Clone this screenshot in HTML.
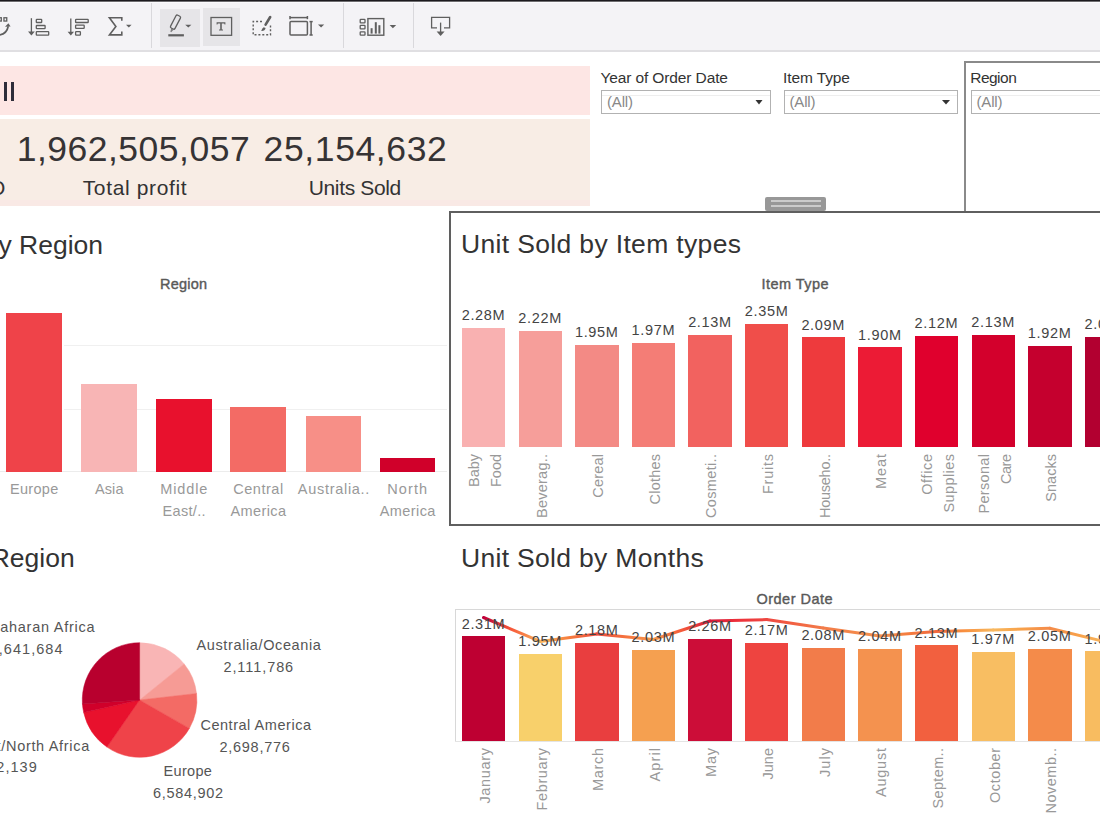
<!DOCTYPE html>
<html><head><meta charset="utf-8"><style>
html,body{margin:0;padding:0;}
body{width:1100px;height:825px;position:relative;overflow:hidden;background:#fff;font-family:"Liberation Sans", sans-serif;}
</style></head><body>
<div style="position:absolute;left:0px;top:0px;width:1100px;height:50px;background:#f4f3f6;"></div>
<div style="position:absolute;left:0px;top:0px;width:1100px;height:1px;background:#1c1a1e;"></div>
<div style="position:absolute;left:0px;top:1px;width:1100px;height:1px;background:#6e6d70;"></div>
<div style="position:absolute;left:0px;top:2px;width:1100px;height:1px;background:#fbfafd;"></div>
<div style="position:absolute;left:0px;top:50px;width:1100px;height:2px;background:#e0dfe2;"></div>
<div style="position:absolute;left:151px;top:3px;width:1px;height:45px;background:#d9d8dc;"></div>
<div style="position:absolute;left:343px;top:3px;width:1px;height:45px;background:#d9d8dc;"></div>
<div style="position:absolute;left:413px;top:3px;width:1px;height:45px;background:#d9d8dc;"></div>
<div style="position:absolute;left:160px;top:9px;width:40px;height:38px;background:#e6e5e8;"></div>
<div style="position:absolute;left:203px;top:8px;width:37px;height:38px;background:#e6e5e8;"></div>
<div style="position:absolute;left:0px;top:66px;width:590px;height:49px;background:#fde6e4;"></div>
<div style="position:absolute;left:0px;top:119px;width:590px;height:86.5px;background:#f8ede5;"></div>
<div style="position:absolute;left:0px;top:200px;width:590px;height:5.5px;background:#f9e9e5;"></div>
<div style="position:absolute;left:3.9px;top:81.8px;width:2.7px;height:19px;background:#2e2d3a;"></div>
<div style="position:absolute;left:10.9px;top:81.8px;width:2.7px;height:19px;background:#2e2d3a;"></div>
<div style="position:absolute;left:601px;top:90px;width:170px;height:24px;background:#fff;box-sizing:border-box;border:1px solid #b2b2b2;"></div>
<div style="position:absolute;left:783.5px;top:90px;width:174px;height:24px;background:#fff;box-sizing:border-box;border:1px solid #b2b2b2;"></div>
<div style="position:absolute;left:971px;top:90px;width:140px;height:24px;background:#fff;box-sizing:border-box;border:1px solid #b2b2b2;"></div>
<div style="position:absolute;left:602px;top:95px;width:168px;height:1px;background:#eeeeee;"></div>
<div style="position:absolute;left:784.5px;top:95px;width:172px;height:1px;background:#eeeeee;"></div>
<div style="position:absolute;left:972px;top:95px;width:130px;height:1px;background:#eeeeee;"></div>
<div style="position:absolute;left:964px;top:61px;width:2px;height:150px;background:#8a8a8a;"></div>
<div style="position:absolute;left:964px;top:61px;width:136px;height:2px;background:#8a8a8a;"></div>
<div style="position:absolute;left:765px;top:197px;width:61px;height:14px;background:#989898;border-radius:2px;"></div>
<div style="position:absolute;left:771px;top:200px;width:50px;height:1.5px;background:#cbcbcb;"></div>
<div style="position:absolute;left:771px;top:205px;width:50px;height:1.5px;background:#cbcbcb;"></div>
<div style="position:absolute;left:449px;top:211px;width:700px;height:2px;background:#5f5f5f;"></div>
<div style="position:absolute;left:449px;top:211px;width:2px;height:315px;background:#5f5f5f;"></div>
<div style="position:absolute;left:449px;top:524px;width:700px;height:2px;background:#5f5f5f;"></div>
<div style="position:absolute;left:462.0px;top:327.5px;width:43.4px;height:119.5px;background:#f9b1b1;"></div>
<div style="position:absolute;left:518.62px;top:331px;width:43.4px;height:116px;background:#f69e9a;"></div>
<div style="position:absolute;left:575.24px;top:344.5px;width:43.4px;height:102.5px;background:#f38a85;"></div>
<div style="position:absolute;left:631.86px;top:343.2px;width:43.4px;height:103.80000000000001px;background:#f47d76;"></div>
<div style="position:absolute;left:688.48px;top:335px;width:43.4px;height:112px;background:#f2625f;"></div>
<div style="position:absolute;left:745.1px;top:324px;width:43.4px;height:123px;background:#f04e4a;"></div>
<div style="position:absolute;left:801.72px;top:337.4px;width:43.4px;height:109.60000000000002px;background:#ee3a3d;"></div>
<div style="position:absolute;left:858.34px;top:347.4px;width:43.4px;height:99.60000000000002px;background:#ec1b35;"></div>
<div style="position:absolute;left:914.96px;top:335.8px;width:43.4px;height:111.19999999999999px;background:#e0002d;"></div>
<div style="position:absolute;left:971.58px;top:334.9px;width:43.4px;height:112.10000000000002px;background:#d3002c;"></div>
<div style="position:absolute;left:1028.2px;top:345.7px;width:43.4px;height:101.30000000000001px;background:#c5002e;"></div>
<div style="position:absolute;left:1084.82px;top:337.2px;width:43.4px;height:109.80000000000001px;background:#b20030;"></div>
<div style="position:absolute;left:64px;top:345px;width:383px;height:1px;background:#f0f0f0;"></div>
<div style="position:absolute;left:64px;top:409px;width:383px;height:1px;background:#f0f0f0;"></div>
<div style="position:absolute;left:0px;top:471px;width:447px;height:1px;background:#ececec;"></div>
<div style="position:absolute;left:6px;top:312.6px;width:55.5px;height:159.0px;background:#ef4349;"></div>
<div style="position:absolute;left:81px;top:384px;width:55.5px;height:87.6px;background:#f8b5b5;"></div>
<div style="position:absolute;left:156px;top:398.6px;width:55.5px;height:73.0px;background:#e8112d;"></div>
<div style="position:absolute;left:230.2px;top:407.3px;width:55.5px;height:64.3px;background:#f36b65;"></div>
<div style="position:absolute;left:305.7px;top:415.7px;width:55.5px;height:55.9px;background:#f78f87;"></div>
<div style="position:absolute;left:379.5px;top:457.7px;width:55.5px;height:13.9px;background:#d0002a;"></div>
<div style="position:absolute;left:455px;top:609px;width:700px;height:1px;background:#d8d8d8;"></div>
<div style="position:absolute;left:455px;top:609px;width:1px;height:133px;background:#d8d8d8;"></div>
<div style="position:absolute;left:455px;top:741px;width:700px;height:1px;background:#e4e4e4;"></div>
<div style="position:absolute;left:462.0px;top:636.4px;width:43.4px;height:104.6px;background:#be0032;"></div>
<div style="position:absolute;left:518.62px;top:653.9px;width:43.4px;height:87.1px;background:#f8d06b;"></div>
<div style="position:absolute;left:575.24px;top:642.5px;width:43.4px;height:98.5px;background:#e93e3f;"></div>
<div style="position:absolute;left:631.86px;top:650px;width:43.4px;height:91px;background:#f5a050;"></div>
<div style="position:absolute;left:688.48px;top:639px;width:43.4px;height:102px;background:#cc0d38;"></div>
<div style="position:absolute;left:745.1px;top:642.6px;width:43.4px;height:98.4px;background:#ee4440;"></div>
<div style="position:absolute;left:801.72px;top:647.6px;width:43.4px;height:93.4px;background:#f27c4a;"></div>
<div style="position:absolute;left:858.34px;top:648.6px;width:43.4px;height:92.4px;background:#f4924f;"></div>
<div style="position:absolute;left:914.96px;top:645.2px;width:43.4px;height:95.8px;background:#f2603f;"></div>
<div style="position:absolute;left:971.58px;top:652px;width:43.4px;height:89px;background:#f8be62;"></div>
<div style="position:absolute;left:1028.2px;top:649px;width:43.4px;height:92px;background:#f48b4a;"></div>
<div style="position:absolute;left:1084.82px;top:651.2px;width:43.4px;height:89.8px;background:#f8bc60;"></div>
<svg width="1100" height="825" style="position:absolute;left:0;top:0"><defs><linearGradient id="lg0" gradientUnits="userSpaceOnUse" x1="483.5" y1="617.5" x2="540.12" y2="641.4"><stop offset="0" stop-color="#c0003a"/><stop offset="0.5" stop-color="#f75a3a"/><stop offset="1" stop-color="#f7b45a"/></linearGradient><linearGradient id="lg1" gradientUnits="userSpaceOnUse" x1="540.12" y1="641.4" x2="596.74" y2="634"><stop offset="0" stop-color="#f7b45a"/><stop offset="0.5" stop-color="#f77f3e"/><stop offset="1" stop-color="#ea4a3e"/></linearGradient><linearGradient id="lg2" gradientUnits="userSpaceOnUse" x1="596.74" y1="634" x2="653.36" y2="639.5"><stop offset="0" stop-color="#ea4a3e"/><stop offset="0.5" stop-color="#f5723e"/><stop offset="1" stop-color="#f59a4c"/></linearGradient><linearGradient id="lg3" gradientUnits="userSpaceOnUse" x1="653.36" y1="639.5" x2="709.98" y2="621"><stop offset="0" stop-color="#f59a4c"/><stop offset="0.5" stop-color="#f55a3a"/><stop offset="1" stop-color="#d51a3a"/></linearGradient><linearGradient id="lg4" gradientUnits="userSpaceOnUse" x1="709.98" y1="621" x2="766.5999999999999" y2="619.6"><stop offset="0" stop-color="#d51a3a"/><stop offset="0.5" stop-color="#ee313a"/><stop offset="1" stop-color="#ee4842"/></linearGradient><linearGradient id="lg5" gradientUnits="userSpaceOnUse" x1="766.5999999999999" y1="619.6" x2="823.22" y2="628"><stop offset="0" stop-color="#ee4842"/><stop offset="0.5" stop-color="#f26242"/><stop offset="1" stop-color="#f27c4a"/></linearGradient><linearGradient id="lg6" gradientUnits="userSpaceOnUse" x1="823.22" y1="628" x2="879.8399999999999" y2="636"><stop offset="0" stop-color="#f27c4a"/><stop offset="0.5" stop-color="#f4874a"/><stop offset="1" stop-color="#f4924f"/></linearGradient><linearGradient id="lg7" gradientUnits="userSpaceOnUse" x1="879.8399999999999" y1="636" x2="936.46" y2="631.5"><stop offset="0" stop-color="#f4924f"/><stop offset="0.5" stop-color="#f47d3f"/><stop offset="1" stop-color="#f2683f"/></linearGradient><linearGradient id="lg8" gradientUnits="userSpaceOnUse" x1="936.46" y1="631.5" x2="993.0799999999999" y2="630"><stop offset="0" stop-color="#f2683f"/><stop offset="0.5" stop-color="#f8903f"/><stop offset="1" stop-color="#f8b85e"/></linearGradient><linearGradient id="lg9" gradientUnits="userSpaceOnUse" x1="993.0799999999999" y1="630" x2="1049.6999999999998" y2="628.3"><stop offset="0" stop-color="#f8b85e"/><stop offset="0.5" stop-color="#f8a14a"/><stop offset="1" stop-color="#f48b4a"/></linearGradient><linearGradient id="lg10" gradientUnits="userSpaceOnUse" x1="1049.6999999999998" y1="628.3" x2="1106.32" y2="642"><stop offset="0" stop-color="#f48b4a"/><stop offset="0.5" stop-color="#f8a14a"/><stop offset="1" stop-color="#f8b85e"/></linearGradient></defs><g fill="none" stroke="#5f5f5f" stroke-width="1.3"><rect x="-1.6" y="17.75" width="2.9" height="3.3"/><rect x="3.95" y="17.75" width="2.8" height="3.3"/><path d="M-4 35.2 Q6.5 35.5 8.2 26.4" stroke-width="1.8"/><line x1="31.4" y1="18.2" x2="31.4" y2="32.5"/><rect x="36.3" y="19.3" width="5.4" height="3.2" rx="0.6"/><rect x="36.3" y="25.5" width="8.8" height="3.2" rx="0.6"/><rect x="36.3" y="31.7" width="12.4" height="3.4" rx="0.6"/><line x1="70.8" y1="18.5" x2="70.8" y2="32.5"/><rect x="75.6" y="19.3" width="12.6" height="3.2" rx="0.6"/><rect x="75.6" y="25.2" width="8.6" height="3.2" rx="0.6"/><rect x="75.6" y="31.6" width="4.8" height="3.6" rx="0.6"/><path d="M121.8 20.8 L121.8 17.8 L109.4 17.8 L115.9 26.4 L109.4 34.9 L121.8 34.9 L121.8 31.6" stroke-width="1.6" stroke-linejoin="miter"/><rect x="-2.5" y="-7.2" width="5" height="14.4" rx="1.4" transform="translate(175.5 22.1) rotate(27.6)"/><rect x="211" y="17.5" width="20.6" height="17.8"/><path d="M262 21.5 L253.2 21.5 L253.2 34.8 L270.5 34.8 L270.5 25.2" stroke-dasharray="2 1.9" stroke-width="1.4"/><rect x="290" y="21.6" width="17.4" height="13.4" rx="1" stroke-width="1.5"/><line x1="290" y1="17.6" x2="307.4" y2="17.6" stroke-width="1.5"/><line x1="290" y1="16" x2="290" y2="19.2" stroke-width="1.5"/><line x1="307.4" y1="16" x2="307.4" y2="19.2" stroke-width="1.5"/><line x1="311.1" y1="21.6" x2="311.1" y2="35" stroke-width="1.5"/><line x1="309.5" y1="21.6" x2="312.7" y2="21.6" stroke-width="1.5"/><line x1="309.5" y1="35" x2="312.7" y2="35" stroke-width="1.5"/><rect x="360.2" y="19.4" width="4.8" height="3.4" rx="0.6"/><rect x="360.2" y="25.4" width="4.8" height="3.4" rx="0.6"/><rect x="360.2" y="31.8" width="4.8" height="3.4" rx="0.6"/><rect x="367.9" y="18.6" width="15.9" height="16.6" stroke-width="1.4"/><path d="M437 27.8 L431.6 27.8 L431.6 17.4 L449.6 17.4 L449.6 27.8 L444 27.8"/><line x1="440.6" y1="22.6" x2="440.6" y2="32"/></g><g fill="#5f5f5f"><path d="M5 26.8 L10.6 26.4 L8.4 23.2 Z"/><path d="M28 31.6 L34.8 31.6 L31.4 35.4 Z"/><path d="M67.6 31.8 L74 31.8 L70.8 35.6 Z"/><path d="M126 24.8 L131.6 24.8 L128.8 27.6 Z"/><path d="M185.2 24.8 L191.4 24.8 L188.3 27.6 Z"/><rect x="168.3" y="34.2" width="15.6" height="2.2"/><path d="M216.6 22.2 L225.4 22.2 L225.4 24.6 L224.6 24.6 L224.2 23.4 L221.8 23.4 L221.8 29.6 L223 29.6 L223 30.6 L219 30.6 L219 29.6 L220.2 29.6 L220.2 23.4 L217.8 23.4 L217.4 24.6 L216.6 24.6 Z"/><line x1="270.2" y1="17" x2="265.6" y2="24.6" stroke="#5f5f5f" stroke-width="2.6" stroke-linecap="round"/><path d="M263.6 27.2 L265.6 28 Q265 31.2 261.2 30.9 Q262 28.4 263.6 27.2 Z"/><path d="M171.2 28.6 L173.6 29.8 L171.2 32.2 L170.4 31.8 Z" opacity="0.75"/><path d="M318 24.5 L324.2 24.5 L321.1 27.5 Z"/><path d="M389.6 25 L396.2 25 L392.9 28.2 Z"/><rect x="370.6" y="28.2" width="2" height="5.4"/><rect x="374.8" y="22.2" width="2" height="11.4"/><rect x="378.4" y="25.2" width="2" height="8.4"/><path d="M436.6 31.4 L444.6 31.4 L440.6 36 Z"/></g><path d="M755.5 100 L762.5 100 L759 104.6 Z" fill="#333"/><path d="M942 100 L950 100 L946 104.6 Z" fill="#333"/><path d="M139.6 700.0 L139.60 642.70 A57.3 57.3 0 0 1 184.13 663.94 Z" fill="#f9b5b5" stroke="#f9b5b5" stroke-width="0.5" stroke-linejoin="round"/><path d="M139.6 700.0 L184.13 663.94 A57.3 57.3 0 0 1 196.53 693.51 Z" fill="#f69b95" stroke="#f69b95" stroke-width="0.5" stroke-linejoin="round"/><path d="M139.6 700.0 L196.53 693.51 A57.3 57.3 0 0 1 189.37 728.39 Z" fill="#f36b65" stroke="#f36b65" stroke-width="0.5" stroke-linejoin="round"/><path d="M139.6 700.0 L189.37 728.39 A57.3 57.3 0 0 1 106.98 747.11 Z" fill="#ef4349" stroke="#ef4349" stroke-width="0.5" stroke-linejoin="round"/><path d="M139.6 700.0 L106.98 747.11 A57.3 57.3 0 0 1 83.70 712.60 Z" fill="#e8112d" stroke="#e8112d" stroke-width="0.5" stroke-linejoin="round"/><path d="M139.6 700.0 L83.70 712.60 A57.3 57.3 0 0 1 82.44 704.00 Z" fill="#d0002a" stroke="#d0002a" stroke-width="0.5" stroke-linejoin="round"/><path d="M139.6 700.0 L82.44 704.00 A57.3 57.3 0 0 1 139.60 642.70 Z" fill="#b8002e" stroke="#b8002e" stroke-width="0.5" stroke-linejoin="round"/><line x1="483.50" y1="617.5" x2="540.12" y2="641.4" stroke="url(#lg0)" stroke-width="3" stroke-linecap="round"/><line x1="540.12" y1="641.4" x2="596.74" y2="634" stroke="url(#lg1)" stroke-width="3" stroke-linecap="round"/><line x1="596.74" y1="634" x2="653.36" y2="639.5" stroke="url(#lg2)" stroke-width="3" stroke-linecap="round"/><line x1="653.36" y1="639.5" x2="709.98" y2="621" stroke="url(#lg3)" stroke-width="3" stroke-linecap="round"/><line x1="709.98" y1="621" x2="766.60" y2="619.6" stroke="url(#lg4)" stroke-width="3" stroke-linecap="round"/><line x1="766.60" y1="619.6" x2="823.22" y2="628" stroke="url(#lg5)" stroke-width="3" stroke-linecap="round"/><line x1="823.22" y1="628" x2="879.84" y2="636" stroke="url(#lg6)" stroke-width="3" stroke-linecap="round"/><line x1="879.84" y1="636" x2="936.46" y2="631.5" stroke="url(#lg7)" stroke-width="3" stroke-linecap="round"/><line x1="936.46" y1="631.5" x2="993.08" y2="630" stroke="url(#lg8)" stroke-width="3" stroke-linecap="round"/><line x1="993.08" y1="630" x2="1049.70" y2="628.3" stroke="url(#lg9)" stroke-width="3" stroke-linecap="round"/><line x1="1049.70" y1="628.3" x2="1106.32" y2="642" stroke="url(#lg10)" stroke-width="3" stroke-linecap="round"/></svg>
<div style="position:absolute;top:132.24px;font-size:35.5px;line-height:35.5px;color:#363334;white-space:pre;letter-spacing:0.497px;left:16.7px;">1,962,505,057</div>
<div style="position:absolute;top:132.24px;font-size:35.5px;line-height:35.5px;color:#363334;white-space:pre;letter-spacing:0.612px;left:263.6px;">25,154,632</div>
<div style="position:absolute;top:176.62px;font-size:21px;line-height:21px;color:#333;white-space:pre;letter-spacing:0.646px;left:82.7px;">Total profit</div>
<div style="position:absolute;top:176.62px;font-size:21px;line-height:21px;color:#333;white-space:pre;letter-spacing:-0.347px;left:308.7px;">Units Sold</div>
<div style="position:absolute;top:176.62px;font-size:21px;line-height:21px;color:#333;white-space:pre;letter-spacing:0.000px;left:-11px;">O</div>
<div style="position:absolute;top:70.48px;font-size:15.5px;line-height:15.5px;color:#333;white-space:pre;letter-spacing:-0.114px;left:600.4px;">Year of Order Date</div>
<div style="position:absolute;top:70.48px;font-size:15.5px;line-height:15.5px;color:#333;white-space:pre;letter-spacing:-0.098px;left:783px;">Item Type</div>
<div style="position:absolute;top:70.48px;font-size:15.5px;line-height:15.5px;color:#333;white-space:pre;letter-spacing:-0.505px;left:970.2px;">Region</div>
<div style="position:absolute;top:93.80px;font-size:15px;line-height:15px;color:#888;white-space:pre;letter-spacing:-0.168px;left:607px;">(All)</div>
<div style="position:absolute;top:93.80px;font-size:15px;line-height:15px;color:#888;white-space:pre;letter-spacing:-0.168px;left:789.5px;">(All)</div>
<div style="position:absolute;top:93.80px;font-size:15px;line-height:15px;color:#888;white-space:pre;letter-spacing:-0.168px;left:976.5px;">(All)</div>
<div style="position:absolute;top:230.76px;font-size:26.5px;line-height:26.5px;color:#333;white-space:pre;letter-spacing:0.342px;left:461px;">Unit Sold by Item types</div>
<div style="position:absolute;top:276.72px;font-size:14.5px;line-height:14.5px;color:#595959;white-space:pre;letter-spacing:0.474px;left:761.4px;-webkit-text-stroke:0.4px #595959;">Item Type</div>
<div style="position:absolute;top:307.72px;font-size:14.5px;line-height:14.5px;color:#444;white-space:pre;letter-spacing:0.672px;left:483.5px;transform:translateX(-50%);">2.28M</div>
<div style="position:absolute;left:485.0px;top:454px;width:0;height:0;transform:rotate(-90deg);transform-origin:0 0"><div style="position:absolute;right:0;top:-22.50px;text-align:right;white-space:pre;font-size:14.5px;line-height:22.5px;color:#999"><div style="letter-spacing:-0.021px;margin-right:0.021px">Baby</div><div style="letter-spacing:-0.021px;margin-right:0.021px">Food</div></div></div>
<div style="position:absolute;top:311.22px;font-size:14.5px;line-height:14.5px;color:#444;white-space:pre;letter-spacing:0.672px;left:540.12px;transform:translateX(-50%);">2.22M</div>
<div style="position:absolute;left:541.62px;top:454px;width:0;height:0;transform:rotate(-90deg);transform-origin:0 0"><div style="position:absolute;right:0;top:-11.25px;text-align:right;white-space:pre;font-size:14.5px;line-height:22.5px;color:#999"><div style="letter-spacing:0.240px;margin-right:-0.240px">Beverag..</div></div></div>
<div style="position:absolute;top:324.72px;font-size:14.5px;line-height:14.5px;color:#444;white-space:pre;letter-spacing:0.672px;left:596.74px;transform:translateX(-50%);">1.95M</div>
<div style="position:absolute;left:598.24px;top:454px;width:0;height:0;transform:rotate(-90deg);transform-origin:0 0"><div style="position:absolute;right:0;top:-11.25px;text-align:right;white-space:pre;font-size:14.5px;line-height:22.5px;color:#999"><div style="letter-spacing:0.196px;margin-right:-0.196px">Cereal</div></div></div>
<div style="position:absolute;top:323.42px;font-size:14.5px;line-height:14.5px;color:#444;white-space:pre;letter-spacing:0.672px;left:653.36px;transform:translateX(-50%);">1.97M</div>
<div style="position:absolute;left:654.86px;top:454px;width:0;height:0;transform:rotate(-90deg);transform-origin:0 0"><div style="position:absolute;right:0;top:-11.25px;text-align:right;white-space:pre;font-size:14.5px;line-height:22.5px;color:#999"><div style="letter-spacing:0.221px;margin-right:-0.221px">Clothes</div></div></div>
<div style="position:absolute;top:315.22px;font-size:14.5px;line-height:14.5px;color:#444;white-space:pre;letter-spacing:0.672px;left:709.98px;transform:translateX(-50%);">2.13M</div>
<div style="position:absolute;left:711.48px;top:454px;width:0;height:0;transform:rotate(-90deg);transform-origin:0 0"><div style="position:absolute;right:0;top:-11.25px;text-align:right;white-space:pre;font-size:14.5px;line-height:22.5px;color:#999"><div style="letter-spacing:0.344px;margin-right:-0.344px">Cosmeti..</div></div></div>
<div style="position:absolute;top:304.22px;font-size:14.5px;line-height:14.5px;color:#444;white-space:pre;letter-spacing:0.672px;left:766.5999999999999px;transform:translateX(-50%);">2.35M</div>
<div style="position:absolute;left:768.0999999999999px;top:454px;width:0;height:0;transform:rotate(-90deg);transform-origin:0 0"><div style="position:absolute;right:0;top:-11.25px;text-align:right;white-space:pre;font-size:14.5px;line-height:22.5px;color:#999"><div style="letter-spacing:0.750px;margin-right:-0.750px">Fruits</div></div></div>
<div style="position:absolute;top:317.62px;font-size:14.5px;line-height:14.5px;color:#444;white-space:pre;letter-spacing:0.672px;left:823.22px;transform:translateX(-50%);">2.09M</div>
<div style="position:absolute;left:824.72px;top:454px;width:0;height:0;transform:rotate(-90deg);transform-origin:0 0"><div style="position:absolute;right:0;top:-11.25px;text-align:right;white-space:pre;font-size:14.5px;line-height:22.5px;color:#999"><div style="letter-spacing:-0.264px;margin-right:0.264px">Househo..</div></div></div>
<div style="position:absolute;top:327.62px;font-size:14.5px;line-height:14.5px;color:#444;white-space:pre;letter-spacing:0.672px;left:879.8399999999999px;transform:translateX(-50%);">1.90M</div>
<div style="position:absolute;left:881.3399999999999px;top:454px;width:0;height:0;transform:rotate(-90deg);transform-origin:0 0"><div style="position:absolute;right:0;top:-11.25px;text-align:right;white-space:pre;font-size:14.5px;line-height:22.5px;color:#999"><div style="letter-spacing:0.917px;margin-right:-0.917px">Meat</div></div></div>
<div style="position:absolute;top:316.02px;font-size:14.5px;line-height:14.5px;color:#444;white-space:pre;letter-spacing:0.672px;left:936.46px;transform:translateX(-50%);">2.12M</div>
<div style="position:absolute;left:937.96px;top:454px;width:0;height:0;transform:rotate(-90deg);transform-origin:0 0"><div style="position:absolute;right:0;top:-22.50px;text-align:right;white-space:pre;font-size:14.5px;line-height:22.5px;color:#999"><div style="letter-spacing:0.638px;margin-right:-0.638px">Office</div><div style="letter-spacing:0.425px;margin-right:-0.425px">Supplies</div></div></div>
<div style="position:absolute;top:315.12px;font-size:14.5px;line-height:14.5px;color:#444;white-space:pre;letter-spacing:0.672px;left:993.0799999999999px;transform:translateX(-50%);">2.13M</div>
<div style="position:absolute;left:994.5799999999999px;top:454px;width:0;height:0;transform:rotate(-90deg);transform-origin:0 0"><div style="position:absolute;right:0;top:-22.50px;text-align:right;white-space:pre;font-size:14.5px;line-height:22.5px;color:#999"><div style="letter-spacing:0.324px;margin-right:-0.324px">Personal</div><div style="letter-spacing:-0.479px;margin-right:0.479px">Care</div></div></div>
<div style="position:absolute;top:325.92px;font-size:14.5px;line-height:14.5px;color:#444;white-space:pre;letter-spacing:0.672px;left:1049.6999999999998px;transform:translateX(-50%);">1.92M</div>
<div style="position:absolute;left:1051.1999999999998px;top:454px;width:0;height:0;transform:rotate(-90deg);transform-origin:0 0"><div style="position:absolute;right:0;top:-11.25px;text-align:right;white-space:pre;font-size:14.5px;line-height:22.5px;color:#999"><div style="letter-spacing:0.028px;margin-right:-0.028px">Snacks</div></div></div>
<div style="position:absolute;top:317.42px;font-size:14.5px;line-height:14.5px;color:#444;white-space:pre;letter-spacing:0.672px;left:1106.32px;transform:translateX(-50%);">2.02M</div>
<div style="position:absolute;left:1107.82px;top:454px;width:0;height:0;transform:rotate(-90deg);transform-origin:0 0"><div style="position:absolute;right:0;top:-11.25px;text-align:right;white-space:pre;font-size:14.5px;line-height:22.5px;color:#999"><div style="letter-spacing:-0.863px;margin-right:0.863px">Vegetables</div></div></div>
<div style="position:absolute;top:231.56px;font-size:26.5px;line-height:26.5px;color:#333;white-space:pre;letter-spacing:0.000px;right:997.00px;">by Region</div>
<div style="position:absolute;top:276.72px;font-size:14.5px;line-height:14.5px;color:#595959;white-space:pre;letter-spacing:0.209px;left:160px;-webkit-text-stroke:0.4px #595959;">Region</div>
<div style="position:absolute;top:481.72px;font-size:14.5px;line-height:14.5px;color:#999;white-space:pre;letter-spacing:0.307px;left:34.25px;transform:translateX(-50%);">Europe</div>
<div style="position:absolute;top:481.72px;font-size:14.5px;line-height:14.5px;color:#999;white-space:pre;letter-spacing:0.127px;left:109.25px;transform:translateX(-50%);">Asia</div>
<div style="position:absolute;top:481.72px;font-size:14.5px;line-height:14.5px;color:#999;white-space:pre;letter-spacing:0.856px;left:184.25px;transform:translateX(-50%);">Middle</div>
<div style="position:absolute;top:503.92px;font-size:14.5px;line-height:14.5px;color:#999;white-space:pre;letter-spacing:0.315px;left:184.25px;transform:translateX(-50%);">East/..</div>
<div style="position:absolute;top:481.72px;font-size:14.5px;line-height:14.5px;color:#999;white-space:pre;letter-spacing:0.542px;left:258.45px;transform:translateX(-50%);">Central</div>
<div style="position:absolute;top:503.92px;font-size:14.5px;line-height:14.5px;color:#999;white-space:pre;letter-spacing:0.419px;left:258.45px;transform:translateX(-50%);">America</div>
<div style="position:absolute;top:481.72px;font-size:14.5px;line-height:14.5px;color:#999;white-space:pre;letter-spacing:0.712px;left:333.95px;transform:translateX(-50%);">Australia..</div>
<div style="position:absolute;top:481.72px;font-size:14.5px;line-height:14.5px;color:#999;white-space:pre;letter-spacing:1.083px;left:407.75px;transform:translateX(-50%);">North</div>
<div style="position:absolute;top:503.92px;font-size:14.5px;line-height:14.5px;color:#999;white-space:pre;letter-spacing:0.419px;left:407.75px;transform:translateX(-50%);">America</div>
<div style="position:absolute;top:544.96px;font-size:26.5px;line-height:26.5px;color:#333;white-space:pre;letter-spacing:0.000px;right:1025.30px;">Region</div>
<div style="position:absolute;top:620.42px;font-size:14.5px;line-height:14.5px;color:#555;white-space:pre;letter-spacing:0.740px;right:1004.76px;">Sub-Saharan Africa</div>
<div style="position:absolute;top:642.22px;font-size:14.5px;line-height:14.5px;color:#555;white-space:pre;letter-spacing:1.048px;right:1036.45px;">6,641,684</div>
<div style="position:absolute;top:637.72px;font-size:14.5px;line-height:14.5px;color:#555;white-space:pre;letter-spacing:0.622px;left:196.5px;">Australia/Oceania</div>
<div style="position:absolute;top:659.52px;font-size:14.5px;line-height:14.5px;color:#555;white-space:pre;letter-spacing:0.930px;left:223.4px;">2,111,786</div>
<div style="position:absolute;top:717.82px;font-size:14.5px;line-height:14.5px;color:#555;white-space:pre;letter-spacing:0.532px;left:200.4px;">Central America</div>
<div style="position:absolute;top:739.52px;font-size:14.5px;line-height:14.5px;color:#555;white-space:pre;letter-spacing:0.723px;left:219.5px;">2,698,776</div>
<div style="position:absolute;top:764.42px;font-size:14.5px;line-height:14.5px;color:#555;white-space:pre;letter-spacing:0.327px;left:163.5px;">Europe</div>
<div style="position:absolute;top:786.32px;font-size:14.5px;line-height:14.5px;color:#555;white-space:pre;letter-spacing:0.686px;left:153px;">6,584,902</div>
<div style="position:absolute;top:738.52px;font-size:14.5px;line-height:14.5px;color:#555;white-space:pre;letter-spacing:0.676px;right:1010.12px;">Middle East/North Africa</div>
<div style="position:absolute;top:760.32px;font-size:14.5px;line-height:14.5px;color:#555;white-space:pre;letter-spacing:1.048px;right:1062.15px;">2,982,139</div>
<div style="position:absolute;top:545.26px;font-size:26.5px;line-height:26.5px;color:#333;white-space:pre;letter-spacing:0.314px;left:461px;">Unit Sold by Months</div>
<div style="position:absolute;top:591.72px;font-size:14.5px;line-height:14.5px;color:#595959;white-space:pre;letter-spacing:0.474px;left:756.5px;-webkit-text-stroke:0.4px #595959;">Order Date</div>
<div style="position:absolute;left:485.0px;top:748px;width:0;height:0;transform:rotate(-90deg);transform-origin:0 0"><div style="position:absolute;right:0;top:-11.25px;text-align:right;white-space:pre;font-size:14.5px;line-height:22.5px;color:#999"><div style="letter-spacing:0.668px;margin-right:-0.668px">January</div></div></div>
<div style="position:absolute;left:541.62px;top:748px;width:0;height:0;transform:rotate(-90deg);transform-origin:0 0"><div style="position:absolute;right:0;top:-11.25px;text-align:right;white-space:pre;font-size:14.5px;line-height:22.5px;color:#999"><div style="letter-spacing:0.638px;margin-right:-0.638px">February</div></div></div>
<div style="position:absolute;left:598.24px;top:748px;width:0;height:0;transform:rotate(-90deg);transform-origin:0 0"><div style="position:absolute;right:0;top:-11.25px;text-align:right;white-space:pre;font-size:14.5px;line-height:22.5px;color:#999"><div style="letter-spacing:0.676px;margin-right:-0.676px">March</div></div></div>
<div style="position:absolute;left:654.86px;top:748px;width:0;height:0;transform:rotate(-90deg);transform-origin:0 0"><div style="position:absolute;right:0;top:-11.25px;text-align:right;white-space:pre;font-size:14.5px;line-height:22.5px;color:#999"><div style="letter-spacing:1.096px;margin-right:-1.096px">April</div></div></div>
<div style="position:absolute;left:711.48px;top:748px;width:0;height:0;transform:rotate(-90deg);transform-origin:0 0"><div style="position:absolute;right:0;top:-11.25px;text-align:right;white-space:pre;font-size:14.5px;line-height:22.5px;color:#999"><div style="letter-spacing:0.797px;margin-right:-0.797px">May</div></div></div>
<div style="position:absolute;left:768.0999999999999px;top:748px;width:0;height:0;transform:rotate(-90deg);transform-origin:0 0"><div style="position:absolute;right:0;top:-11.25px;text-align:right;white-space:pre;font-size:14.5px;line-height:22.5px;color:#999"><div style="letter-spacing:0.049px;margin-right:-0.049px">June</div></div></div>
<div style="position:absolute;left:824.72px;top:748px;width:0;height:0;transform:rotate(-90deg);transform-origin:0 0"><div style="position:absolute;right:0;top:-11.25px;text-align:right;white-space:pre;font-size:14.5px;line-height:22.5px;color:#999"><div style="letter-spacing:1.068px;margin-right:-1.068px">July</div></div></div>
<div style="position:absolute;left:881.3399999999999px;top:748px;width:0;height:0;transform:rotate(-90deg);transform-origin:0 0"><div style="position:absolute;right:0;top:-11.25px;text-align:right;white-space:pre;font-size:14.5px;line-height:22.5px;color:#999"><div style="letter-spacing:0.769px;margin-right:-0.769px">August</div></div></div>
<div style="position:absolute;left:937.96px;top:748px;width:0;height:0;transform:rotate(-90deg);transform-origin:0 0"><div style="position:absolute;right:0;top:-11.25px;text-align:right;white-space:pre;font-size:14.5px;line-height:22.5px;color:#999"><div style="letter-spacing:0.353px;margin-right:-0.353px">Septem..</div></div></div>
<div style="position:absolute;left:994.5799999999999px;top:748px;width:0;height:0;transform:rotate(-90deg);transform-origin:0 0"><div style="position:absolute;right:0;top:-11.25px;text-align:right;white-space:pre;font-size:14.5px;line-height:22.5px;color:#999"><div style="letter-spacing:0.568px;margin-right:-0.568px">October</div></div></div>
<div style="position:absolute;left:1051.1999999999998px;top:748px;width:0;height:0;transform:rotate(-90deg);transform-origin:0 0"><div style="position:absolute;right:0;top:-11.25px;text-align:right;white-space:pre;font-size:14.5px;line-height:22.5px;color:#999"><div style="letter-spacing:0.491px;margin-right:-0.491px">Novemb..</div></div></div>
<div style="position:absolute;left:1107.82px;top:748px;width:0;height:0;transform:rotate(-90deg);transform-origin:0 0"><div style="position:absolute;right:0;top:-11.25px;text-align:right;white-space:pre;font-size:14.5px;line-height:22.5px;color:#999"><div style="letter-spacing:-0.699px;margin-right:0.699px">December</div></div></div>
<div style="position:absolute;top:616.72px;font-size:14.5px;line-height:14.5px;color:#444;white-space:pre;letter-spacing:0.672px;left:483.5px;transform:translateX(-50%);">2.31M</div>
<div style="position:absolute;top:634.22px;font-size:14.5px;line-height:14.5px;color:#444;white-space:pre;letter-spacing:0.672px;left:540.12px;transform:translateX(-50%);">1.95M</div>
<div style="position:absolute;top:622.82px;font-size:14.5px;line-height:14.5px;color:#444;white-space:pre;letter-spacing:0.672px;left:596.74px;transform:translateX(-50%);">2.18M</div>
<div style="position:absolute;top:630.32px;font-size:14.5px;line-height:14.5px;color:#444;white-space:pre;letter-spacing:0.672px;left:653.36px;transform:translateX(-50%);">2.03M</div>
<div style="position:absolute;top:619.32px;font-size:14.5px;line-height:14.5px;color:#444;white-space:pre;letter-spacing:0.672px;left:709.98px;transform:translateX(-50%);">2.26M</div>
<div style="position:absolute;top:622.92px;font-size:14.5px;line-height:14.5px;color:#444;white-space:pre;letter-spacing:0.672px;left:766.5999999999999px;transform:translateX(-50%);">2.17M</div>
<div style="position:absolute;top:627.92px;font-size:14.5px;line-height:14.5px;color:#444;white-space:pre;letter-spacing:0.672px;left:823.22px;transform:translateX(-50%);">2.08M</div>
<div style="position:absolute;top:628.92px;font-size:14.5px;line-height:14.5px;color:#444;white-space:pre;letter-spacing:0.672px;left:879.8399999999999px;transform:translateX(-50%);">2.04M</div>
<div style="position:absolute;top:625.52px;font-size:14.5px;line-height:14.5px;color:#444;white-space:pre;letter-spacing:0.672px;left:936.46px;transform:translateX(-50%);">2.13M</div>
<div style="position:absolute;top:632.32px;font-size:14.5px;line-height:14.5px;color:#444;white-space:pre;letter-spacing:0.672px;left:993.0799999999999px;transform:translateX(-50%);">1.97M</div>
<div style="position:absolute;top:629.32px;font-size:14.5px;line-height:14.5px;color:#444;white-space:pre;letter-spacing:0.672px;left:1049.6999999999998px;transform:translateX(-50%);">2.05M</div>
<div style="position:absolute;top:631.52px;font-size:14.5px;line-height:14.5px;color:#444;white-space:pre;letter-spacing:0.672px;left:1106.32px;transform:translateX(-50%);">1.99M</div>
</body></html>
